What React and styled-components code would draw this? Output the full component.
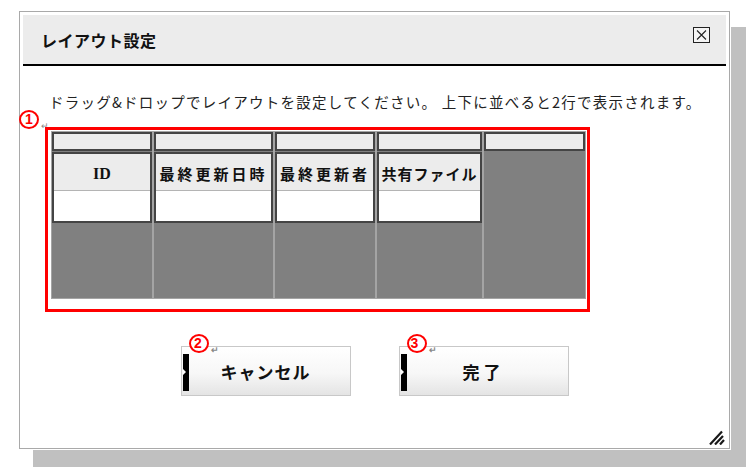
import React from 'react';
import styled, { createGlobalStyle } from 'styled-components';

const GlobalStyle = createGlobalStyle`
  html, body {
    margin: 0;
    background: #fff;
  }
  body {
    font-family: "Noto Sans CJK JP", "Liberation Sans", sans-serif;
    color: #1a1a1a;
  }
`;

const Page = styled.div`
  height: 471px;
  box-sizing: border-box;
  padding: 11px 0 0 19px;
`;

const Dialog = styled.div`
  width: 711px;
  height: 438px;
  box-sizing: border-box;
  border: 1px solid #a9a9a9;
  background: #fff;
  padding: 3px;
  box-shadow: 0 0 0 1px #fff, 15px 17px 0 1px #c0c0c0;
  display: flex;
  flex-direction: column;
`;

const Header = styled.div`
  height: 49px;
  flex-shrink: 0;
  background: #ececec;
  border-bottom: 2px solid #000;
  display: flex;
  justify-content: space-between;
  align-items: center;
  padding: 0 15px 0 18px;
`;

const Title = styled.h1`
  margin: 0;
  font-size: 16px;
  font-weight: bold;
  letter-spacing: 0.5px;
  color: #111;
`;

const CloseButton = styled.button`
  align-self: flex-start;
  margin-top: 12px;
  width: 18px;
  height: 16px;
  padding: 0;
  border: 0;
  background: none;
  display: flex;
`;

const Description = styled.p`
  margin: 26px 0 0 26px;
  font-size: 14.5px;
  line-height: 20px;
  letter-spacing: 1.25px;
  color: #222;
`;

const Marker = styled.span`
  position: absolute;
  left: ${(p) => p.$left}px;
  top: ${(p) => p.$top}px;
  display: flex;
  align-items: flex-end;
  pointer-events: none;
`;

const Circle = styled.span`
  width: 20px;
  height: 19px;
  box-sizing: border-box;
  border: 2px solid #ff0000;
  border-radius: 50%;
  background: #fff;
  color: #ff0000;
  font-family: "Liberation Sans", sans-serif;
  font-weight: bold;
  font-size: 14px;
  line-height: 15px;
  text-align: center;
`;

const Return = styled.span`
  font-size: 9px;
  line-height: 9px;
  color: #888;
  margin-left: 2px;
  margin-bottom: -1px;
`;

const Frame = styled.div`
  position: relative;
  margin: 15px 0 0 22px;
  width: 545px;
  box-sizing: border-box;
  border: 3px solid #ff0000;
  padding: 1px 1px 10px 3px;
`;

const Grid = styled.div`
  height: 168px;
  box-sizing: border-box;
  background: #a4a4a4;
  padding: 1px;
  display: flex;
  gap: 2px;
`;

const Column = styled.div`
  width: ${(p) => (p.$width ? `${p.$width}px` : 'auto')};
  flex: ${(p) => (p.$width ? 'none' : '1')};
  background: #808080;
  display: flex;
  flex-direction: column;
  gap: 1px;
`;

const ColumnHead = styled.div`
  height: 19px;
  box-sizing: border-box;
  border: 2px solid #444;
  background: #ececec;
`;

const Field = styled.div`
  height: 71px;
  box-sizing: border-box;
  border: 2px solid #444;
  background: #fff;
  display: flex;
  flex-direction: column;
`;

const FieldLabel = styled.div`
  height: 33px;
  background: #ececec;
  border-bottom: 1px solid #b4b4b4;
  display: flex;
  align-items: center;
  justify-content: center;
  white-space: nowrap;
  overflow: hidden;
  font-family: ${(p) =>
    p.$serif ? '"Liberation Serif", serif' : '"Noto Sans CJK JP", sans-serif'};
  font-size: ${(p) => (p.$serif ? 16 : 15)}px;
  font-weight: bold;
  letter-spacing: ${(p) => p.$spacing}px;
  padding-top: 3px;
  color: #111;
`;

const ButtonRow = styled.div`
  margin-top: 34px;
  display: flex;
  justify-content: center;
  gap: 48px;
`;

const Button = styled.button`
  position: relative;
  width: 170px;
  height: 50px;
  box-sizing: border-box;
  border: 1px solid #c8c8c8;
  background: linear-gradient(#ffffff 0%, #f7f7f7 55%, #e4e4e4 100%);
  padding: 0 0 0 1px;
  display: flex;
  align-items: center;
  font-family: "Noto Sans CJK JP", sans-serif;
  font-size: 17px;
  font-weight: bold;
  color: #111;
  letter-spacing: ${(p) => p.$spacing}px;
`;

const ButtonBar = styled.span`
  position: relative;
  width: 6px;
  height: 37px;
  margin-top: 2px;
  background: #000;
  flex-shrink: 0;

  &::after {
    content: '';
    position: absolute;
    left: 0;
    top: 15px;
    border-left: 3px solid #fff;
    border-top: 3px solid transparent;
    border-bottom: 3px solid transparent;
  }
`;

const ButtonText = styled.span`
  flex: 1;
  text-align: center;
  margin-right: 7px;
`;

const Footer = styled.div`
  margin-top: auto;
  display: flex;
  justify-content: flex-end;
`;

const columns = [
  { width: 100, label: 'ID', serif: true, spacing: 0 },
  { width: 119, label: '最終更新日時', spacing: 3 },
  { width: 100, label: '最終更新者', spacing: 3 },
  { width: 105, label: '共有ファイル', spacing: 1 },
  { label: null },
];

const CloseIcon = () => (
  <svg width="18" height="16" viewBox="0 0 18 16">
    <rect x="0.5" y="0.5" width="16" height="15" fill="#f4f4f4" stroke="#222" />
    <path d="M4 3.5 L13 12.5 M13 3.5 L4 12.5" stroke="#222" strokeWidth="1.1" />
  </svg>
);

const Grip = () => (
  <svg width="17" height="15" viewBox="0 0 17 15">
    <path
      d="M1 14.5 L13 1.5 M6 14.5 L14 6 M11 14.5 L15 10"
      stroke="#1a1a1a"
      strokeWidth="2.2"
    />
  </svg>
);

const Annotation = ({ n, left, top }) => (
  <Marker $left={left} $top={top}>
    <Circle>{n}</Circle>
    <Return>↵</Return>
  </Marker>
);

export default function App() {
  return (
    <Page>
      <GlobalStyle />
      <Dialog>
        <Header>
          <Title>レイアウト設定</Title>
          <CloseButton aria-label="閉じる">
            <CloseIcon />
          </CloseButton>
        </Header>

        <Description>
          ドラッグ&amp;ドロップでレイアウトを設定してください。 上下に並べると2行で表示されます。
        </Description>

        <Frame>
          <Annotation n="1" left={-29} top={-20} />
          <Grid>
            {columns.map((col, i) => (
              <Column key={i} $width={col.width}>
                <ColumnHead />
                {col.label && (
                  <Field>
                    <FieldLabel $serif={col.serif} $spacing={col.spacing}>
                      {col.label}
                    </FieldLabel>
                  </Field>
                )}
              </Column>
            ))}
          </Grid>
        </Frame>

        <ButtonRow>
          <Button $spacing={1}>
            <Annotation n="2" left={7} top={-13} />
            <ButtonBar />
            <ButtonText>キャンセル</ButtonText>
          </Button>
          <Button $spacing={4}>
            <Annotation n="3" left={7} top={-13} />
            <ButtonBar />
            <ButtonText>完了</ButtonText>
          </Button>
        </ButtonRow>

        <Footer>
          <Grip />
        </Footer>
      </Dialog>
    </Page>
  );
}
